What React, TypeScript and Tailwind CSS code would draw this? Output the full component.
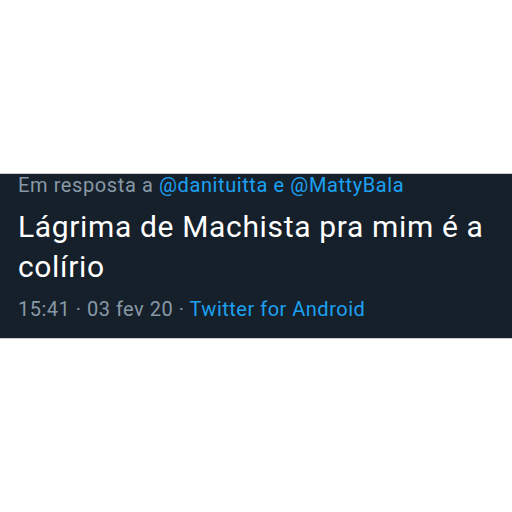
export default function App() {
  return (
    <div className="flex h-[512px] w-[512px] flex-col justify-center bg-white font-['Roboto',sans-serif]">
      <div className="h-[166px] border-y border-[#c9cdd1] bg-[#15202b] pl-[18px] pr-[10px]">
        <p className="text-[20px] leading-[22px] tracking-[0.6px] text-[#8899a6]">
          Em resposta a <span className="text-[#1da1f2]">@danituitta</span>{" "}
          <span className="text-[#1da1f2]">e @MattyBala</span>
        </p>
        <p className="mt-[11px] text-[30px] leading-[40px] tracking-[0.65px] text-white">
          Lágrima de Machista pra mim é a colírio
        </p>
        <p className="mt-[11px] text-[20px] leading-[22px] tracking-[0.5px] text-[#8899a6]">
          15:41 · 03 fev 20 · <span className="text-[#1da1f2]">Twitter for Android</span>
        </p>
      </div>
    </div>
  );
}
